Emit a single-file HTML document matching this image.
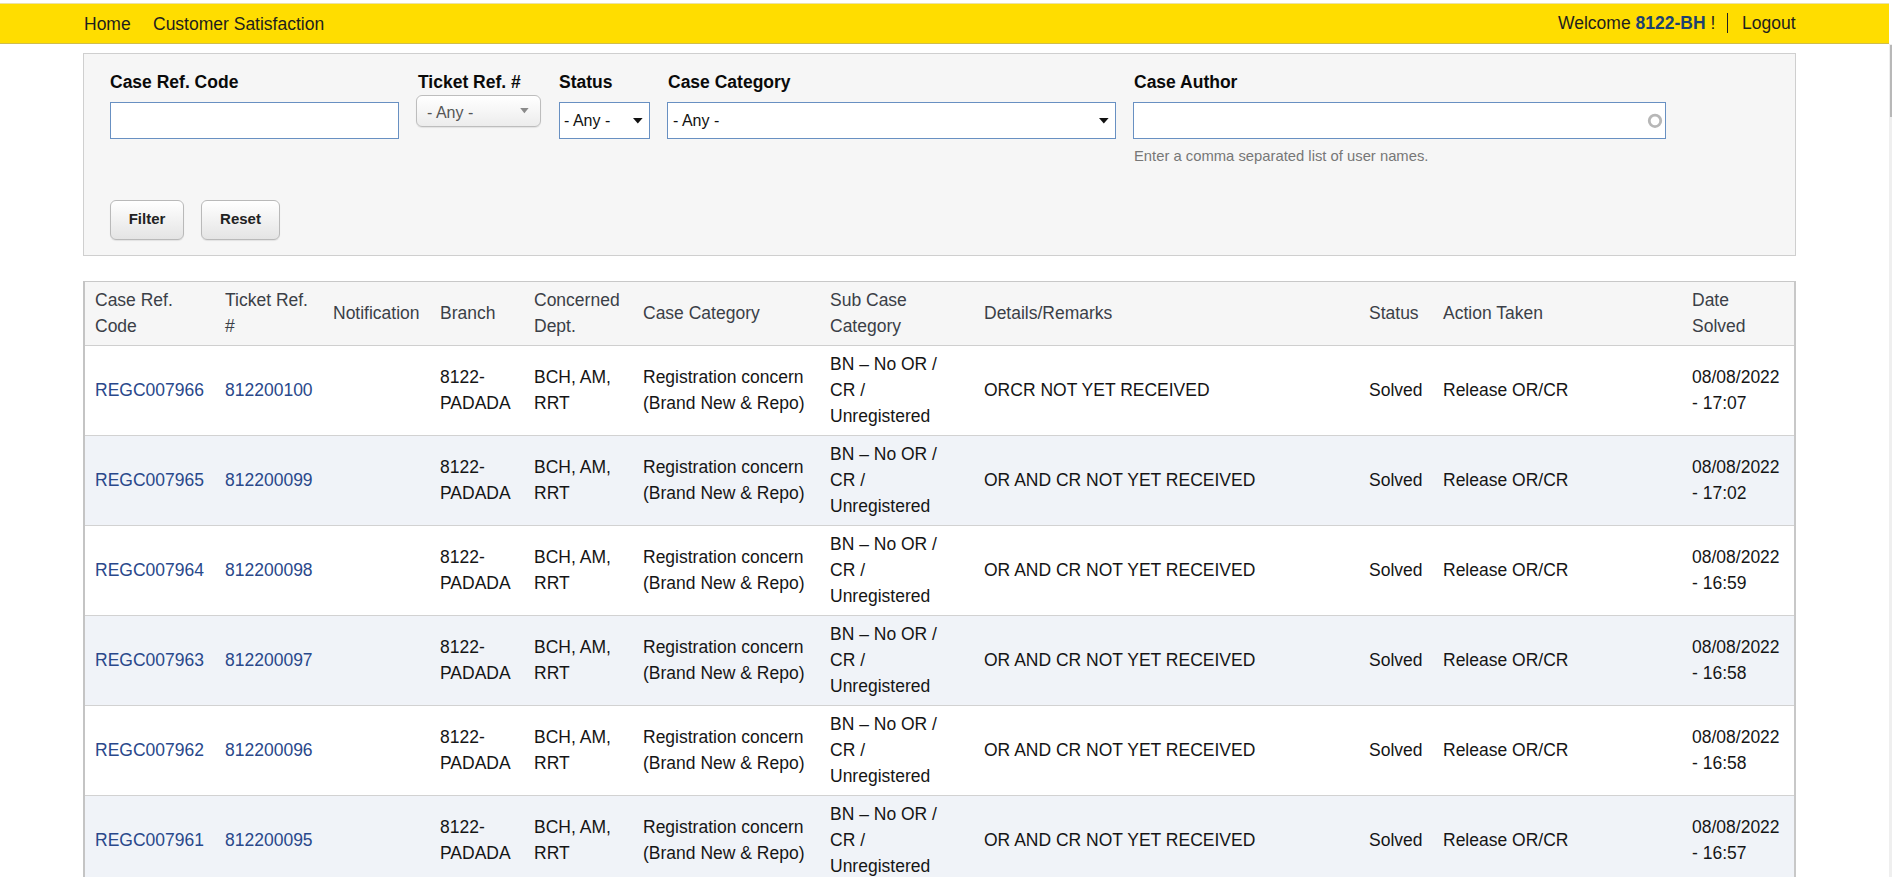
<!DOCTYPE html>
<html><head><meta charset="utf-8">
<style>
*{box-sizing:border-box;margin:0;padding:0}
html,body{width:1892px;height:877px;overflow:hidden;background:#fff;font-family:"Liberation Sans",sans-serif;color:#222}
.abs{position:absolute}
#top{position:absolute;left:0;top:3px;width:1889px;height:41px;background:#ffdd00;border-top:1px solid #ebe2a6;border-bottom:1px solid #cfbd4e}
#top span{position:absolute;font-size:17.5px;color:#1e1e1e;white-space:nowrap}
#sb{position:absolute;left:1889px;top:44px;width:3px;height:833px;background:#efefef}
#thumb{position:absolute;left:1890px;top:45px;width:2px;height:72px;background:#b8b8b8}
#panel{position:absolute;left:83px;top:53px;width:1713px;height:203px;background:#f6f6f6;border:1px solid #cfcfcf}
.lbl{position:absolute;font-weight:bold;font-size:17.5px;color:#0a0a0a;white-space:nowrap}
.inp{position:absolute;background:#fff;border:1px solid #6890c2}
.sel{position:absolute;font-size:16px;color:#111;white-space:nowrap}
.arr{position:absolute;width:0;height:0;border-left:4.75px solid transparent;border-right:4.75px solid transparent;border-top:5.2px solid #111}
.btn{position:absolute;height:40px;box-shadow:0 1px 1px rgba(0,0,0,.08);border:1px solid #b9b9b9;border-radius:6px;background:linear-gradient(#ffffff,#e4e4e4);font-weight:bold;font-size:15px;color:#222;text-align:center;line-height:36px}
#tbl{position:absolute;left:83px;top:281px;border-collapse:collapse;table-layout:fixed;font-size:17.5px;line-height:26px}
#tbl{border-left:2px solid #c4c4c4;border-right:2px solid #c8c8c8;border-top:1px solid #c8c8c8}
#tbl th{font-weight:normal;text-align:left;color:#3b3f47;background:#f6f6f6;padding:5px 0 6px 11px;vertical-align:middle;height:63px;border-bottom:1px solid #cfcfcf}
#tbl td{padding:5px 0 6px 11px;vertical-align:middle;height:89px;color:#151515;border-bottom:1px solid #d2d2d2}
#tbl tr.e td{background:#f0f3f8}
#tbl tr>*:first-child{padding-left:10px}
#tbl a{color:#29488b;text-decoration:none}
</style></head><body>
<div id="top">
  <span style="left:84px;top:10px">Home</span>
  <span style="left:153px;top:10px">Customer Satisfaction</span>
  <span style="left:1558px;top:9px">Welcome <b style="color:#1d416f">8122-BH</b> !</span>
  <span style="left:1727px;top:9px;width:1px;height:20px;background:#222"></span>
  <span style="left:1742px;top:9px">Logout</span>
</div>
<div id="sb"></div><div id="thumb"></div>
<div id="panel">
  <div class="lbl" style="left:26px;top:18px">Case Ref. Code</div>
  <div class="inp" style="left:26px;top:48px;width:289px;height:37px"></div>
  <div class="lbl" style="left:334px;top:18px">Ticket Ref. #</div>
  <div class="abs" style="left:332px;top:41px;width:125px;height:32px;border:1px solid #bdbdbd;border-radius:6px;background:linear-gradient(#ffffff 0%,#f6f6f6 50%,#ececec 100%);box-shadow:0 1px 1px rgba(0,0,0,.08)">
    <span class="sel" style="left:10px;top:8px;color:#555">- Any -</span>
    <svg class="abs" style="left:103px;top:12px" width="10" height="6"><polygon points="0.2,0 8.6,0 4.4,5.2" fill="#8a8a8a"/></svg>
  </div>
  <div class="lbl" style="left:475px;top:18px">Status</div>
  <div class="inp" style="left:475px;top:48px;width:91px;height:37px">
    <span class="sel" style="left:4px;top:9px">- Any -</span>
    <svg class="abs" style="left:73px;top:15px" width="10" height="6"><polygon points="0,0 9.6,0 4.8,5.4" fill="#111"/></svg>
  </div>
  <div class="lbl" style="left:584px;top:18px">Case Category</div>
  <div class="inp" style="left:583px;top:48px;width:449px;height:37px">
    <span class="sel" style="left:5px;top:9px">- Any -</span>
    <svg class="abs" style="left:431px;top:15px" width="10" height="6"><polygon points="0,0 9.6,0 4.8,5.4" fill="#111"/></svg>
  </div>
  <div class="lbl" style="left:1050px;top:18px">Case Author</div>
  <div class="inp" style="left:1049px;top:48px;width:533px;height:37px">
    <svg class="abs" style="left:513px;top:10px" width="16" height="16"><circle cx="8" cy="7.8" r="5.75" fill="none" stroke="#b7b7b7" stroke-width="2.8"/></svg>
  </div>
  <div class="abs" style="left:1050px;top:93.5px;font-size:14.8px;color:#777;white-space:nowrap">Enter a comma separated list of user names.</div>
  <div class="btn" style="left:26px;top:146px;width:74px">Filter</div>
  <div class="btn" style="left:117px;top:146px;width:79px">Reset</div>
</div>
<table id="tbl">
<colgroup><col style="width:130px"><col style="width:108px"><col style="width:107px"><col style="width:94px"><col style="width:109px"><col style="width:187px"><col style="width:154px"><col style="width:385px"><col style="width:74px"><col style="width:249px"><col style="width:114px"></colgroup>
<tr><th>Case Ref.<br>Code</th><th>Ticket Ref.<br>#</th><th>Notification</th><th>Branch</th><th>Concerned<br>Dept.</th><th>Case Category</th><th>Sub Case<br>Category</th><th>Details/Remarks</th><th>Status</th><th>Action Taken</th><th>Date<br>Solved</th></tr>
<tr><td><a>REGC007966</a></td><td><a>812200100</a></td><td></td><td>8122-<br>PADADA</td><td>BCH, AM,<br>RRT</td><td>Registration concern<br>(Brand New &amp; Repo)</td><td>BN – No OR /<br>CR /<br>Unregistered</td><td>ORCR NOT YET RECEIVED</td><td>Solved</td><td>Release OR/CR</td><td>08/08/2022<br>- 17:07</td></tr>
<tr class="e"><td><a>REGC007965</a></td><td><a>812200099</a></td><td></td><td>8122-<br>PADADA</td><td>BCH, AM,<br>RRT</td><td>Registration concern<br>(Brand New &amp; Repo)</td><td>BN – No OR /<br>CR /<br>Unregistered</td><td>OR AND CR NOT YET RECEIVED</td><td>Solved</td><td>Release OR/CR</td><td>08/08/2022<br>- 17:02</td></tr>
<tr><td><a>REGC007964</a></td><td><a>812200098</a></td><td></td><td>8122-<br>PADADA</td><td>BCH, AM,<br>RRT</td><td>Registration concern<br>(Brand New &amp; Repo)</td><td>BN – No OR /<br>CR /<br>Unregistered</td><td>OR AND CR NOT YET RECEIVED</td><td>Solved</td><td>Release OR/CR</td><td>08/08/2022<br>- 16:59</td></tr>
<tr class="e"><td><a>REGC007963</a></td><td><a>812200097</a></td><td></td><td>8122-<br>PADADA</td><td>BCH, AM,<br>RRT</td><td>Registration concern<br>(Brand New &amp; Repo)</td><td>BN – No OR /<br>CR /<br>Unregistered</td><td>OR AND CR NOT YET RECEIVED</td><td>Solved</td><td>Release OR/CR</td><td>08/08/2022<br>- 16:58</td></tr>
<tr><td><a>REGC007962</a></td><td><a>812200096</a></td><td></td><td>8122-<br>PADADA</td><td>BCH, AM,<br>RRT</td><td>Registration concern<br>(Brand New &amp; Repo)</td><td>BN – No OR /<br>CR /<br>Unregistered</td><td>OR AND CR NOT YET RECEIVED</td><td>Solved</td><td>Release OR/CR</td><td>08/08/2022<br>- 16:58</td></tr>
<tr class="e"><td><a>REGC007961</a></td><td><a>812200095</a></td><td></td><td>8122-<br>PADADA</td><td>BCH, AM,<br>RRT</td><td>Registration concern<br>(Brand New &amp; Repo)</td><td>BN – No OR /<br>CR /<br>Unregistered</td><td>OR AND CR NOT YET RECEIVED</td><td>Solved</td><td>Release OR/CR</td><td>08/08/2022<br>- 16:57</td></tr>
</table>
</body></html>
